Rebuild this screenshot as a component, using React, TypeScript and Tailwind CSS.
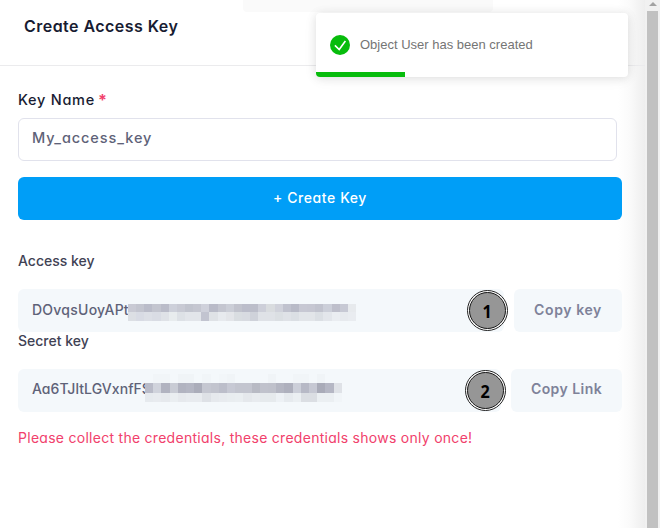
import React from "react";

const upper = {
  middle: "c9cad4 c3c5cf babcc9 c3c5cf babcc9 cdd0da c8cad4 c1c4ce c5c7d1 cfd1db b9bbc8 c4c6d0 cbced7 c1c3cd bbbdca bcbeca cdcfd9 d9dcdf d0d2db c0c2ce b8bac7 c7c8d3 c6c7d2 c1c3ce cccfd9 bebfcb c7c9d4 e7eaed".split(" "),
  bottom: "dcdfe4 d8dbe4 dcdfe6 d9dce4 dfe2e7 e8ecee dde1e6 e2e5ea e2e5ea c2c4d0 dfe2e6 e7eaee e3e5e9 d9dde1 d8dbe1 cfd2da dfe2e7 dfe2e7 dbdfe3 dfe2e7 dbdfe4 e2e5e9 e2e5e9 dbdfe4 e3e6eb eaedf1 e7eaee e9ecf0".split(" "),
};

const lower = {
  top: "f4f8fb f1f5f8 f1f5f8 f4f8fb f0f4f7 f0f4f7 f4f8fb f1f5f8 f4f8fb f2f6f9 f0f4f7 f4f8fb f4f8fb f4f8fb f4f8fb f0f4f7 f4f8fb f4f8fb f1f5f8 f1f5f8 f4f8fb f0f4f7 f4f8fb f4f8fb".split(" "),
  middle: "b9bbc8 d0d3dc b1b3c0 c9ccd5 b1b3c0 b4b6c3 abadba c5c7d1 c2c4ce bcbeca c7c9d4 c3c5cf c3c5cf b8bac4 c0c2cc bfc1cb b4b6c2 aeb0bd cccfd9 b7b9c6 c6c8d3 a9abb8 b5b7c4 dfe2e7".split(" "),
  bottom: "e6eaee e8ebef e6e9ed eaeef1 e6e9ed e8ebef e8ebef dee1e6 e6e9ed e8ebef e9edf0 eaeef1 e5e8ec e8ebef e6eaed e6eaed edf1f5 e6eaee ebeff2 dbdee3 dbdee3 ebeff2 ebeff2 f1f5f8".split(" "),
};

function Strip({ colors, className }: { colors: string[]; className: string }) {
  return (
    <div className={`flex ${className}`}>
      {colors.map((c, i) => (
        <span key={i} className="flex-1" style={{ backgroundColor: `#${c}` }} />
      ))}
    </div>
  );
}

function Marker({ value, className }: { value: string; className: string }) {
  return (
    <div className={`absolute flex size-[41px] items-center justify-center rounded-full border border-[#222] bg-white p-px ${className}`}>
      <div className="flex size-full items-center justify-center rounded-full border-[1.5px] border-[#161616] bg-[#969696] font-['Noto_Sans',sans-serif] text-[18px] font-bold leading-none tracking-normal text-black">
        <span className="scale-x-90">{value}</span>
      </div>
    </div>
  );
}

function Toast() {
  return (
    <div className="absolute left-[316px] top-[13px] flex h-16 w-[312px] items-center overflow-hidden rounded bg-white pl-3.5 shadow-[0_1px_10px_rgba(0,0,0,0.1),0_2px_15px_rgba(0,0,0,0.05)]">
      <svg className="size-5" viewBox="0 0 20 20" fill="none">
        <circle cx="10" cy="10" r="10" fill="#07bc0c" />
        <path d="M4.9 10.4 9.2 14.5 15.4 6.1" stroke="white" strokeWidth="1.6" />
      </svg>
      <span className="ml-2.5 font-['Liberation_Sans',sans-serif] text-[13px] leading-5 text-[#757575]">Object User has been created</span>
      <div className="absolute bottom-0 left-0 h-[5px] w-[89.4px] bg-[#07bc0c]" />
    </div>
  );
}

function Field({ children, className }: { children: React.ReactNode; className: string }) {
  return (
    <div className={`relative h-[43px] rounded-md bg-[#f4f8fb] pl-3.5 text-[14px] font-medium leading-[42px] text-[#5e6278] ${className}`}>
      {children}
    </div>
  );
}

export default function App() {
  return (
    <div className="relative flex h-[528px] w-[660px] overflow-hidden bg-white font-['Inter',sans-serif] [font-feature-settings:'cv11']">
      <div className="w-[645px] bg-[linear-gradient(to_right,white_0,white_618px,#fafafa_630px,#eeeeee_645px)]">
        <header className="relative h-[66px] border-b border-[#ebebed] pl-6 pt-[14px]">
          <div className="absolute left-[243px] top-0 h-3 w-[250px] rounded-b bg-[#fafafa]" />
          <h1 className="relative whitespace-nowrap text-[16px] font-semibold leading-6 tracking-[0.46px] text-[#181c32]">Create Access Key</h1>
        </header>
        <main className="w-[622px] pl-[18px] pt-[23px]">
          <label className="flex h-[22px] items-center text-[14.5px] font-medium tracking-[0.72px] text-[#181c32]">
            Key Name<span className="ml-[3px] text-[16px] font-bold leading-none text-[#f1416c]">*</span>
          </label>
          <div className="mt-[7px] h-[43px] w-[599px] rounded-md border border-[#e1e2ec] bg-white pl-[13px] text-[14.5px] font-medium leading-[38px] tracking-[0.9px] text-[#5e6278]">
            My_access_key
          </div>
          <button className="mt-4 block h-[43px] w-full rounded-md bg-[#009ef7] pb-0.5 text-[14px] font-medium tracking-[0.57px] text-white">
            + Create Key
          </button>
          <div className="mt-[30px] h-[22px] text-[14px] font-medium leading-[22px] text-[#3f4254]">Access key</div>
          <div className="mt-[17px] flex justify-between">
            <Field className="w-[486px]">
              <span className="tracking-[0.25px]">DOvqsUoyAPt</span>
              <div className="absolute left-[110px] top-[15px] w-[228px]">
                <Strip colors={upper.middle} className="h-2" />
                <Strip colors={upper.bottom} className="h-[9px]" />
              </div>
              <Marker value="1" className="left-[448.5px] top-px" />
            </Field>
            <button className="h-[43px] w-[108px] rounded-md bg-[#f4f8fb] pb-0.5 text-[14px] font-semibold tracking-[0.6px] text-[#7e8299]">Copy key</button>
          </div>
          <div className="h-[18px] text-[14px] font-medium leading-[18px] text-[#3f4254]">Secret key</div>
          <div className="mt-[19px] flex justify-between">
            <Field className="w-[483px]">
              <span className="block leading-[40px] tracking-[0.05px]">Aa6TJltLGVxnfFS</span>
              <div className="absolute left-[127px] top-[5px] w-[197px]">
                <Strip colors={lower.top} className="h-[9px]" />
                <Strip colors={lower.middle} className="h-[10px]" />
                <Strip colors={lower.bottom} className="h-[9px]" />
              </div>
              <Marker value="2" className="left-[446.5px] top-px" />
            </Field>
            <button className="h-[43px] w-[111px] rounded-md bg-[#f4f8fb] pb-1 text-[14px] font-semibold tracking-[0.45px] text-[#7e8299]">Copy Link</button>
          </div>
          <p className="mt-[15px] whitespace-nowrap text-[14px] leading-[22px] tracking-[0.275px] text-[#f1416c]">
            Please collect the credentials, these credentials shows only once!
          </p>
        </main>
      </div>
      <div className="flex w-[15px] flex-col items-center bg-[#f1f1f1]">
        <div className="mt-[2px] size-0 border-x-[4px] border-b-[4px] border-x-transparent border-b-[#a3a3a3]" />
        <div className="mt-[5px] w-[11px] flex-1 bg-[#c1c1c1]" />
      </div>
      <Toast />
    </div>
  );
}
